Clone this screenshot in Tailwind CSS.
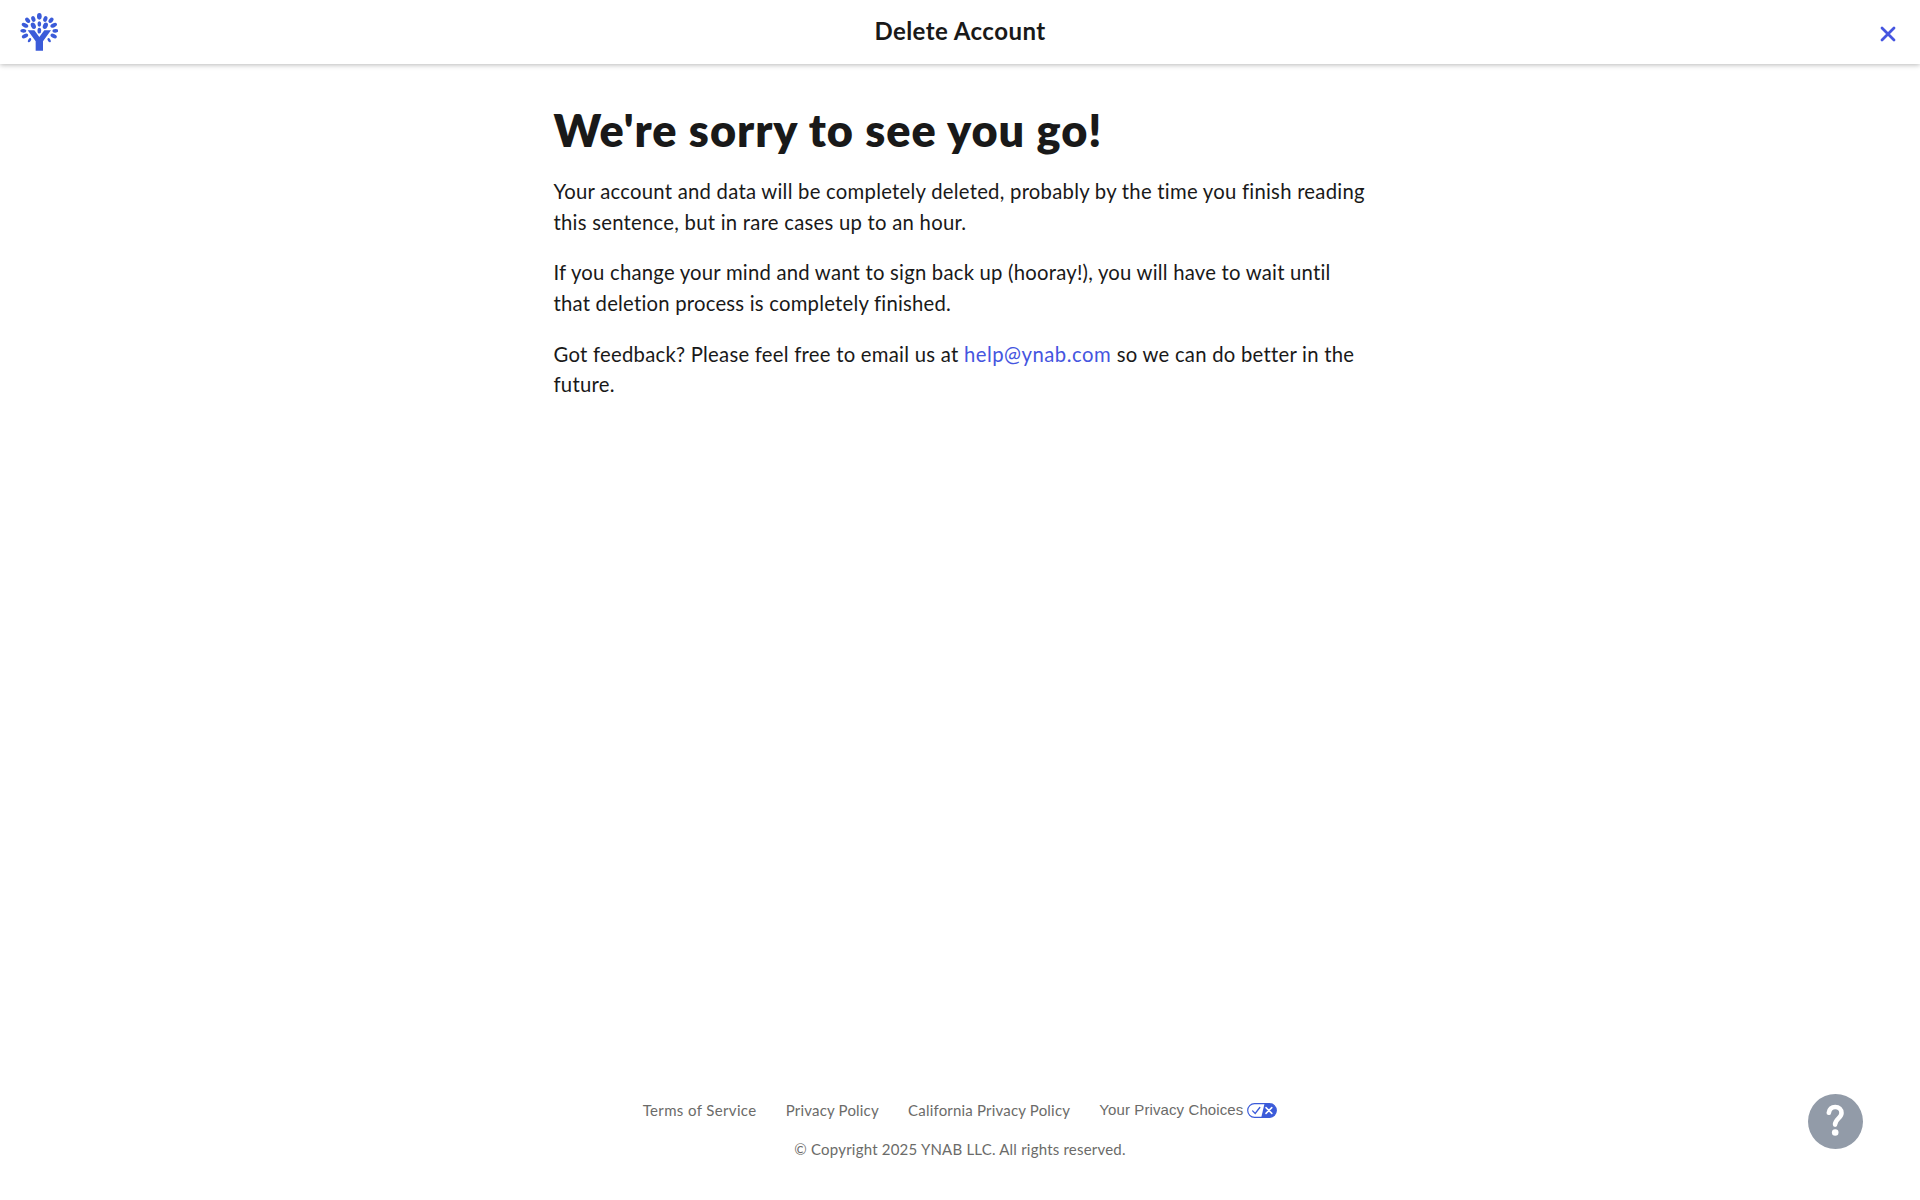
<!DOCTYPE html>
<html lang="en">

<head>
    <meta charset="UTF-8" />
    <meta name="viewport" content="width=device-width, initial-scale=1">
    <title>Delete Account</title>
    <script src="https://cdn.jsdelivr.net/npm/@tailwindcss/browser@4"></script>
</head>

<body class="flex h-screen flex-col bg-white font-['Lato','Figtree',sans-serif] text-[#191919]">
    <!-- Header -->
    <header class="grid h-16 shrink-0 grid-cols-3 items-center px-5 pb-px shadow-[0_1px_5px_rgba(0,0,0,0.28)]">
        <a href="#" aria-label="Home">
            <svg class="size-[38px]" viewBox="60 38 114 114" fill="#3b5bd9" aria-hidden="true">
                <ellipse cx="118" cy="48" rx="7" ry="10" />
                <ellipse cx="100" cy="56" rx="6" ry="9" transform="rotate(-20 100 56)" />
                <ellipse cx="136" cy="56" rx="6" ry="9" transform="rotate(20 136 56)" />
                <ellipse cx="83" cy="60" rx="6" ry="9" transform="rotate(-42 83 60)" />
                <ellipse cx="153" cy="60" rx="6" ry="9" transform="rotate(42 153 60)" />
                <ellipse cx="75" cy="75" rx="6" ry="10.5" transform="rotate(-65 75 75)" />
                <ellipse cx="161" cy="75" rx="6" ry="10.5" transform="rotate(65 161 75)" />
                <ellipse cx="70" cy="91.5" rx="5.5" ry="9" transform="rotate(-85 70 91.5)" />
                <ellipse cx="166" cy="91.5" rx="5.5" ry="9" transform="rotate(85 166 91.5)" />
                <ellipse cx="75" cy="107" rx="6" ry="10" transform="rotate(65 75 107)" />
                <ellipse cx="161" cy="107" rx="6" ry="10" transform="rotate(-65 161 107)" />
                <ellipse cx="88.5" cy="119.5" rx="4" ry="7" transform="rotate(35 88.5 119.5)" />
                <ellipse cx="147.5" cy="119.5" rx="4" ry="7" transform="rotate(-35 147.5 119.5)" />
                <ellipse cx="100" cy="76" rx="7" ry="10" transform="rotate(-25 100 76)" />
                <ellipse cx="136" cy="76" rx="7" ry="10" transform="rotate(25 136 76)" />
                <ellipse cx="118" cy="71" rx="5.5" ry="8" />
                <ellipse cx="118" cy="91" rx="5.5" ry="8.5" />
                <path d="M83 90h20l15 20 15-20h20l-24 33v28h-22v-28z" />
            </svg>
        </a>
        <h1 class="pb-px text-center text-2xl font-bold tracking-[0.45px]">Delete Account</h1>
        <button type="button" class="mr-[3px] justify-self-end pt-1" aria-label="Close">
            <svg class="size-[18px]" viewBox="0 0 18 18" fill="none" stroke="#4555e0" stroke-width="2.8"
                stroke-linecap="round" aria-hidden="true">
                <path d="M3 3l12 12M15 3L3 15" />
            </svg>
        </button>
    </header>

    <!-- Message -->
    <main class="mx-auto w-[813px] grow pt-[37.5px]">
        <h2 class="mb-[18.5px] text-[45px] leading-[56px] font-extrabold tracking-[0.98px]">We're sorry to see you go!</h2>
        <div class="space-y-[20.3px] text-[20.3px] leading-[30.5px] tracking-[0.25px] whitespace-nowrap">
            <p>
                Your account and data will be completely deleted, probably by the time you finish reading<br>
                this sentence, but in rare cases up to an hour.
            </p>
            <p class="tracking-[0.22px]">
                If you change your mind and want to sign back up (hooray!), you will have to wait until<br>
                that deletion process is completely finished.
            </p>
            <p>
                Got feedback? Please feel free to email us at
                <a href="mailto:help@ynab.com" class="tracking-[0.5px] text-[#4555e0]">help@ynab.com</a>
                so we can do better in the<br>
                future.
            </p>
        </div>
    </main>

    <!-- Footer -->
    <footer class="flex shrink-0 flex-col items-center gap-[19px] pb-[41px] text-[15px] leading-5 text-[#6b6b69]">
        <nav class="flex gap-[29.2px]">
            <a href="#" class="tracking-[0.37px]">Terms of Service</a>
            <a href="#" class="tracking-[0.19px]">Privacy Policy</a>
            <a href="#" class="tracking-[0.19px]">California Privacy Policy</a>
            <a href="#" class="flex items-center gap-1 font-['Liberation_Sans',sans-serif] tracking-[0.1px]">
                Your Privacy Choices
                <svg class="h-[15px] w-[30px]" viewBox="0 0 30 15" fill="none" aria-hidden="true">
                    <rect x="0.7" y="0.7" width="28.6" height="13.6" rx="6.8" fill="#fff" />
                    <path d="M17.5 .7h5a6.8 6.8 0 0 1 0 13.6h-8.2z" fill="#3b5bd9" />
                    <rect x="0.7" y="0.7" width="28.6" height="13.6" rx="6.8" stroke="#3b5bd9" stroke-width="1.2" />
                    <path d="M5.600 7.900l2.600 2.600 4.600-6" stroke="#3b5bd9" stroke-width="1.3" stroke-linecap="round" />
                    <path d="M19 4.600l5.800 5.800M24.800 4.600L19 10.400" stroke="#fff" stroke-width="1.5" stroke-linecap="round" />
                </svg>
            </a>
        </nav>
        <p class="tracking-[0.21px]">© Copyright 2025 YNAB LLC. All rights reserved.</p>
    </footer>

    <!-- Help button -->
    <button type="button" class="fixed right-[57px] bottom-[51px] size-[55px] rounded-full bg-[#929ba8]" aria-label="Help">
        <svg class="size-[55px]" viewBox="0 0 55 55" fill="none" aria-hidden="true">
            <path d="M20.8 18.8c.6-3.700 3.200-5.800 6.400-5.800 3.700 0 6.300 2.500 6.300 6 0 5.200-6.400 5.600-6.400 11.600" stroke="#fff"
                stroke-width="4.6" stroke-linecap="round" stroke-linejoin="round" />
            <circle cx="27.2" cy="38.5" r="3.3" fill="#fff" />
        </svg>
    </button>
</body>

</html>
